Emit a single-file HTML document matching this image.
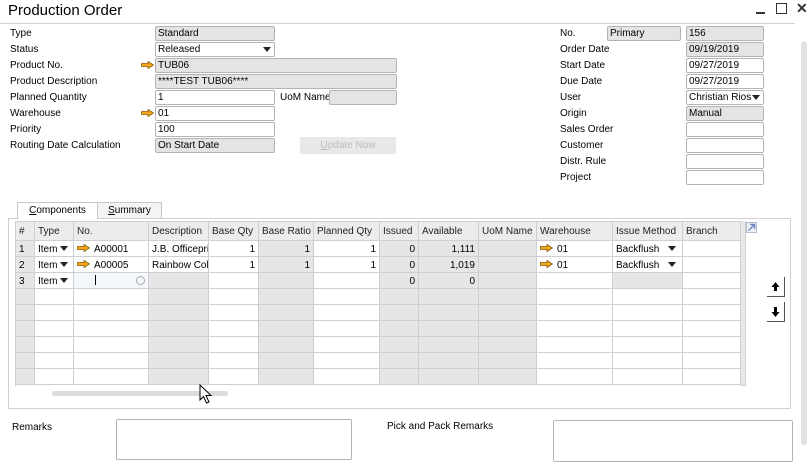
<!DOCTYPE html>
<html><head><meta charset="utf-8"><style>
*{margin:0;padding:0;box-sizing:border-box}
body{width:810px;height:460px;background:#fff;font-family:"Liberation Sans",sans-serif;font-size:10px;color:#000;position:relative;overflow:hidden}
.a{position:absolute;white-space:nowrap}
.l{position:absolute;font-size:10px;line-height:14px}
.f{position:absolute;height:15px;border:1px solid #b4b4b4;border-radius:2px;background:#fff;font-size:10px;line-height:14px;padding-left:2px;white-space:nowrap;overflow:hidden}
.g{background:#e4e4e4}
.dd{position:absolute;right:3px;top:4px;width:0;height:0;border-left:4px solid transparent;border-right:4px solid transparent;border-top:5px solid #222}
.arr{position:absolute;width:13px;height:8px}
.c{position:absolute;border-right:1px solid #cfcfcf;border-bottom:1px solid #cfcfcf;font-size:10px;line-height:17px;padding:0 3px;white-space:nowrap;overflow:hidden}
.h{background:#ececec;color:#222}
.gc{background:#e6e6e6}
.r{text-align:right}
</style></head><body>
<svg width="0" height="0" style="position:absolute"><defs><symbol id="ar" viewBox="0 0 13 8"><path d="M0.5 2.5H7V0.5L12.5 4L7 7.5V5.5H0.5Z" fill="#f2a81d" stroke="#8a5a00" stroke-width="0.8"/></symbol></defs></svg>
<div class="a" style="left:8px;top:2px;font-size:15px;">Production Order</div>
<div class="a" style="left:0;top:23px;width:795px;height:1px;background:#d0d0d0"></div>
<div class="a" style="left:756px;top:12px;width:9px;height:2px;background:#333"></div>
<div class="a" style="left:776px;top:3px;width:11px;height:11px;border:1px solid #333"></div>
<div class="a" style="left:796px;top:0px;font-size:14px;font-weight:bold;color:#333">✕</div>
<div class="a" style="left:801px;top:41px;width:6px;height:404px;background:#e2e2e2;border-radius:3px"></div>

<div class="l" style="left:10px;top:27px">Type</div>
<div class="l" style="left:10px;top:43px">Status</div>
<div class="l" style="left:10px;top:59px">Product No.</div>
<div class="l" style="left:10px;top:75px">Product Description</div>
<div class="l" style="left:10px;top:91px">Planned Quantity</div>
<div class="l" style="left:10px;top:107px">Warehouse</div>
<div class="l" style="left:10px;top:123px">Priority</div>
<div class="l" style="left:10px;top:139px">Routing Date Calculation</div>
<div class="f g" style="left:155px;top:26px;width:120px">Standard</div>
<div class="f" style="left:155px;top:42px;width:120px">Released<span class="dd"></span></div>
<svg class="arr" style="left:141px;top:61px"><use href="#ar"/></svg>
<div class="f g" style="left:155px;top:58px;width:242px">TUB06</div>
<div class="f g" style="left:155px;top:74px;width:242px">****TEST TUB06****</div>
<div class="f" style="left:155px;top:90px;width:120px">1</div>
<div class="l" style="left:280px;top:91px">UoM Name</div>
<div class="f g" style="left:329px;top:90px;width:68px"></div>
<svg class="arr" style="left:141px;top:109px"><use href="#ar"/></svg>
<div class="f" style="left:155px;top:106px;width:120px">01</div>
<div class="f" style="left:155px;top:122px;width:120px">100</div>
<div class="f g" style="left:155px;top:138px;width:120px">On Start Date</div>
<div class="a" style="left:300px;top:137px;width:96px;height:17px;background:#e8e8e8;color:#bdbdbd;text-align:center;line-height:17px"><u>U</u>pdate Now</div>

<div class="l" style="left:560px;top:27px">No.</div>
<div class="f g" style="left:607px;top:26px;width:74px">Primary</div>
<div class="f g" style="left:686px;top:26px;width:78px">156</div>
<div class="l" style="left:560px;top:43px">Order Date</div>
<div class="f g" style="left:686px;top:42px;width:78px">09/19/2019</div>
<div class="l" style="left:560px;top:59px">Start Date</div>
<div class="f" style="left:686px;top:58px;width:78px">09/27/2019</div>
<div class="l" style="left:560px;top:75px">Due Date</div>
<div class="f" style="left:686px;top:74px;width:78px">09/27/2019</div>
<div class="l" style="left:560px;top:91px">User</div>
<div class="f" style="left:686px;top:90px;width:78px">Christian Rios<span class="dd"></span></div>
<div class="l" style="left:560px;top:107px">Origin</div>
<div class="f g" style="left:686px;top:106px;width:78px">Manual</div>
<div class="l" style="left:560px;top:123px">Sales Order</div>
<div class="f" style="left:686px;top:122px;width:78px"></div>
<div class="l" style="left:560px;top:139px">Customer</div>
<div class="f" style="left:686px;top:138px;width:78px"></div>
<div class="l" style="left:560px;top:155px">Distr. Rule</div>
<div class="f" style="left:686px;top:154px;width:78px"></div>
<div class="l" style="left:560px;top:171px">Project</div>
<div class="f" style="left:686px;top:170px;width:78px"></div>

<div class="a" style="left:8px;top:218px;width:783px;height:191px;border:1px solid #d0d0d0"></div>
<div class="a" style="left:17px;top:202px;width:81px;height:17px;border:1px solid #c8c8c8;border-bottom:none;background:#fff;text-align:center;line-height:16px"><u>C</u>omponents</div>
<div class="a" style="left:98px;top:202px;width:64px;height:16px;border:1px solid #c8c8c8;border-left:none;border-bottom:none;background:#f4f4f4;text-align:center;line-height:16px"><u>S</u>ummary</div>
<div class="a" style="left:15px;top:221px;width:726px;height:165px;border-left:1px solid #cfcfcf;border-top:1px solid #cfcfcf"></div>
<div id="grid"></div>
<div class="a" style="left:741px;top:221px;width:5px;height:165px;background:#e8e8e8;border-right:1px solid #cfcfcf;border-bottom:1px solid #cfcfcf"></div>
<svg class="a" style="left:746px;top:222px" width="11" height="11"><rect x="0.5" y="0.5" width="10" height="10" fill="#eef2f8" stroke="#b0bcd0"/><path d="M2.5 8.5L8.5 2.5M4 2.5H8.5V7" stroke="#6b86b8" stroke-width="1.4" fill="none"/></svg>
<div class="a" style="left:52px;top:391px;width:176px;height:5px;background:#dcdcdc;border-radius:3px"></div>
<svg class="a" style="left:199px;top:384px" width="14" height="22"><path d="M1 1V16L4.5 12.5L7.5 19L10 18L7 11.5H12Z" fill="#fff" stroke="#000" stroke-width="1"/></svg>
<div class="a" style="left:767px;top:277px;width:18px;height:20px;border-right:1px solid #555;border-bottom:1px solid #555;background:#fff"><svg width="17" height="19"><path d="M8.5 5L4.5 10H7V14H10V10H12.5Z" fill="#000"/></svg></div>
<div class="a" style="left:767px;top:302px;width:18px;height:20px;border-right:1px solid #555;border-bottom:1px solid #555;background:#fff"><svg width="17" height="19"><path d="M8.5 15L4.5 10H7V5H10V10H12.5Z" fill="#000"/></svg></div>

<div class="l" style="left:12px;top:421px">Remarks</div>
<div class="a" style="left:116px;top:419px;width:236px;height:41px;border:1px solid #b4b4b4;border-radius:2px"></div>
<div class="l" style="left:387px;top:420px">Pick and Pack Remarks</div>
<div class="a" style="left:553px;top:420px;width:240px;height:42px;border:1px solid #b4b4b4;border-radius:2px"></div>

<script>
var cols=[[15,"#",0],[35,"Type",0],[74,"No.",0],[149,"Description",0],[209,"Base Qty",0],[259,"Base Ratio",0],[314,"Planned Qty",0],[380,"Issued",0],[419,"Available",0],[479,"UoM Name",0],[537,"Warehouse",0],[613,"Issue Method",0],[683,"Branch",0],[741,"",0]];
var grey=[0,3,5,7,8,9];
var data=[
["1","Item","A00001","J.B. Officepri","1","1","1","0","1,111","","01","Backflush",""],
["2","Item","A00005","Rainbow Col","1","1","1","0","1,019","","01","Backflush",""],
["3","Item","","","","","","0","0","","","",""]];
var right=[4,5,6,7,8];
var h="";
function cell(i,y,ht,cls,txt,extra){var x=cols[i][0]+(i==0?1:0),w=cols[i+1][0]-cols[i][0]-(i==0?1:0);h+='<div class="c '+cls+'" style="left:'+x+'px;top:'+y+'px;width:'+w+'px;height:'+ht+'px;'+(extra||'')+'">'+txt+'</div>';}
for(var i=0;i<13;i++)cell(i,222,19,"h",cols[i][1],"line-height:19px");
for(var r=0;r<9;r++){var y=241+r*16;
 for(var i=0;i<13;i++){var cls="";var t="";
  var g=grey.indexOf(i)>=0;
  if(r<2&&i==3)g=false;
  if(r==2&&i==11)g=true;
  if(g)cls+="gc";
  if(right.indexOf(i)>=0)cls+=" r";
  if(r<3){t=data[r][i];
   if(i==1)t+='<span class="dd" style="top:5px;right:5px"></span>';
   if(i==11&&r<2)t+='<span class="dd" style="top:5px;right:6px"></span>';
   if((i==2||i==10)&&t)t='<svg style="width:13px;height:8px;vertical-align:0px;margin-right:4px"><use href="#ar"/></svg>'+t;
   if(r==2&&i==2){t='<span style="display:inline-block;width:1px;height:10px;background:#000;margin-left:18px;vertical-align:-1px"></span><span style="position:absolute;right:3px;top:3px;width:9px;height:9px;border:1px solid #aaa;border-radius:50%"></span>';}
  }
  var ex=(r==2&&i==2)?"background:#f4f8fd":"";
  cell(i,y,16,cls,t,ex);}
}
document.getElementById("grid").innerHTML=h;
</script>
</body></html>
